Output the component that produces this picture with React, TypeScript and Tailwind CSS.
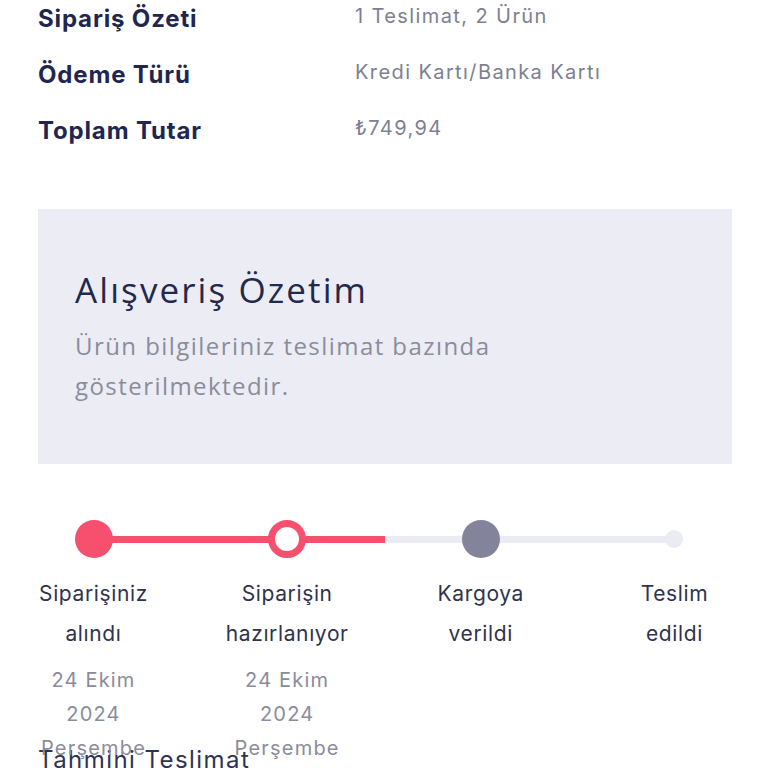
import React from "react";

type Step = {
  title: string[];
  date?: string[];
  state: "done" | "current" | "next" | "last";
};

const steps: Step[] = [
  { title: ["Siparişiniz", "alındı"], date: ["24 Ekim", "2024", "Perşembe"], state: "done" },
  { title: ["Siparişin", "hazırlanıyor"], date: ["24 Ekim", "2024", "Perşembe"], state: "current" },
  { title: ["Kargoya", "verildi"], state: "next" },
  { title: ["Teslim", "edildi"], state: "last" },
];

const summary = [
  { label: "Sipariş Özeti", value: "1 Teslimat, 2 Ürün" },
  { label: "Ödeme Türü", value: "Kredi Kartı/Banka Kartı" },
  { label: "Toplam Tutar", value: "₺749,94" },
];

function Dot({ state }: { state: Step["state"] }) {
  if (state === "done") return <div className="h-[38px] w-[38px] rounded-full bg-[#f6506e]" />;
  if (state === "current")
    return <div className="h-[38px] w-[38px] rounded-full border-[7px] border-[#f6506e] bg-white" />;
  if (state === "next") return <div className="h-[38px] w-[38px] rounded-full bg-[#83849c]" />;
  return <div className="h-[18px] w-[18px] rounded-full bg-[#ebebf3]" />;
}

export default function App() {
  return (
    <main
      className="h-[768px] w-[768px] overflow-hidden bg-white"
      style={{ fontFamily: "Inter, 'Noto Sans', sans-serif" }}
    >
      {/* order summary */}
      <div className="flex flex-col px-[38px]">
        {summary.map((row) => (
          <div key={row.label} className="flex h-[56px] items-start">
            <span className="w-[317px] text-[24px] font-bold leading-[38px] tracking-[0.035em] text-[#1f2750]">
              {row.label}
            </span>
            <span className="text-[20px] leading-[32px] tracking-[0.07em] text-[#7d8092]">{row.value}</span>
          </div>
        ))}
      </div>

      {/* shopping summary box */}
      <div
        className="ml-[38px] mt-[41px] h-[255px] w-[694px] bg-[#ebecf4] px-[37px] pt-[59px]"
        style={{ fontFamily: "'Open Sans', sans-serif" }}
      >
        <h2 className="text-[35px] leading-[44px] tracking-[0.06em] text-[#23294d]">Alışveriş Özetim</h2>
        <p className="mt-[14px] w-[500px] text-[24px] leading-[40px] tracking-[0.06em] text-[#8a8c9c]">
          Ürün bilgileriniz teslimat bazında gösterilmektedir.
        </p>
      </div>

      {/* progress */}
      <div className="relative mt-[56px] h-[290px] px-[38px]">
        <div className="absolute left-[93px] top-[16px] h-[7px] w-[292px] bg-[#f6506e]" />
        <div className="absolute left-[385px] top-[16px] h-[7px] w-[292px] bg-[#ebebf3]" />
        <div className="relative flex justify-between">
          {steps.map((s) => (
            <div key={s.title[0]} className="flex w-[111px] flex-col items-center">
              <div className="flex h-[38px] items-center">
                <Dot state={s.state} />
              </div>
              <div className="mt-[16px] whitespace-nowrap text-center text-[21px] leading-[40px] tracking-[0.03em] text-[#2f3350]">
                {s.title.map((t) => (
                  <div key={t}>{t}</div>
                ))}
              </div>
              <div className="mt-[9px] whitespace-nowrap text-center text-[20px] leading-[34px] tracking-[0.06em] text-[#8a8c9c]">
                {s.date?.map((t) => (
                  <div key={t}>{t}</div>
                ))}
              </div>
            </div>
          ))}
        </div>
      </div>
      <div className="-mt-[65px] px-[38px] text-[24px] leading-[30px] tracking-[0.06em] text-[#2f3350]">
        Tahmini Teslimat
      </div>
    </main>
  );
}
